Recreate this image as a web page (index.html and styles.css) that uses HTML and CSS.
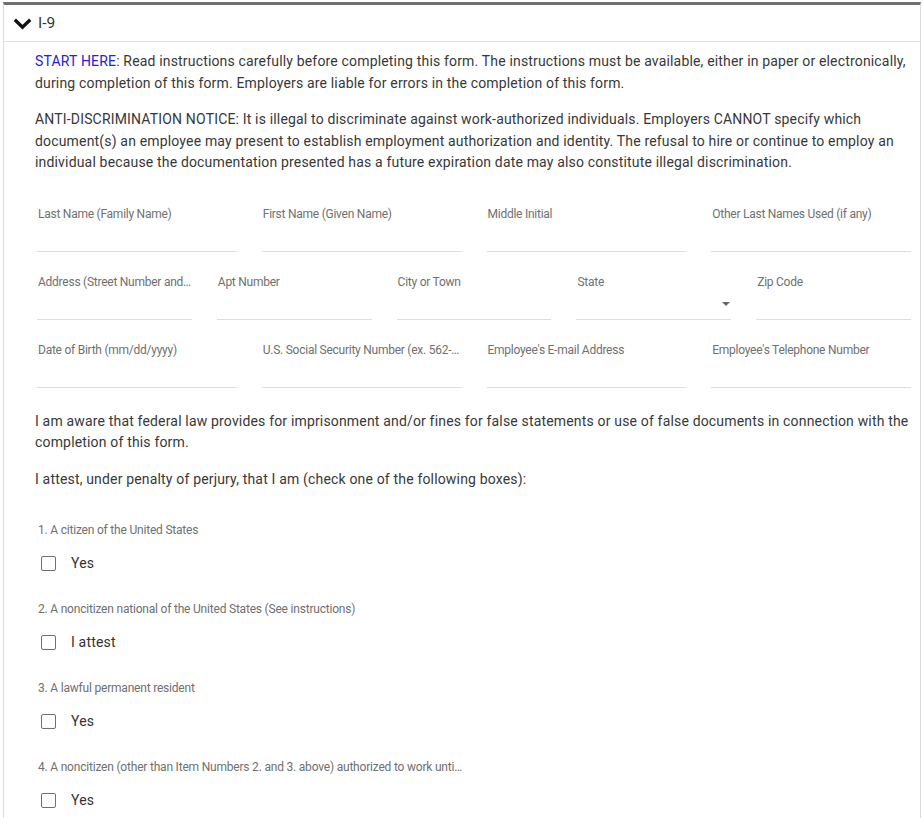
FILE: index.html
```html
<!DOCTYPE html>
<html lang="en">
<head>
    <meta charset="UTF-8">
    <meta name="viewport" content="width=device-width, initial-scale=1.0">
    <title>I-9</title>
    <link rel="stylesheet" href="styles.css">
</head>
<body>
    <div class="panel">
        <div class="panel-header">
            <svg class="chevron" width="19" height="12" viewBox="0 0 19 12">
                <polyline points="1.8,1.8 9.5,9.3 17.2,1.8" fill="none" stroke="#111" stroke-width="3.3"/>
            </svg>
            <span class="panel-title">I-9</span>
        </div>

        <div class="panel-body">
            <p class="text"><span class="start">START HERE</span>: Read instructions carefully before completing this form. The instructions must be available, either in paper or electronically, during completion of this form. Employers are liable for errors in the completion of this form.</p>
            <p class="text">ANTI-DISCRIMINATION NOTICE: It is illegal to discriminate against work-authorized individuals. Employers CANNOT specify which document(s) an employee may present to establish employment authorization and identity. The refusal to hire or continue to employ an individual because the documentation presented has a future expiration date may also constitute illegal discrimination.</p>

            <div class="fields">
                <div class="row cols-4">
                    <div class="field"><label>Last Name (Family Name)</label><div class="input"></div></div>
                    <div class="field"><label>First Name (Given Name)</label><div class="input"></div></div>
                    <div class="field"><label>Middle Initial</label><div class="input"></div></div>
                    <div class="field"><label>Other Last Names Used (if any)</label><div class="input"></div></div>
                </div>
                <div class="row cols-5">
                    <div class="field"><label>Address (Street Number and Name)</label><div class="input"></div></div>
                    <div class="field"><label>Apt Number</label><div class="input"></div></div>
                    <div class="field"><label>City or Town</label><div class="input"></div></div>
                    <div class="field"><label>State</label><div class="input select"><span class="caret"></span></div></div>
                    <div class="field"><label>Zip Code</label><div class="input"></div></div>
                </div>
                <div class="row cols-4">
                    <div class="field"><label>Date of Birth (mm/dd/yyyy)</label><div class="input"></div></div>
                    <div class="field"><label>U.S. Social Security Number (ex. 562-12-3456)</label><div class="input"></div></div>
                    <div class="field"><label>Employee's E-mail Address</label><div class="input"></div></div>
                    <div class="field"><label>Employee's Telephone Number</label><div class="input"></div></div>
                </div>
            </div>

            <p class="text">I am aware that federal law provides for imprisonment and/or fines for false statements or use of false documents in connection with the completion of this form.</p>
            <p class="text">I attest, under penalty of perjury, that I am (check one of the following boxes):</p>

            <div class="questions">
                <div class="question">
                    <div class="q-label">1. A citizen of the United States</div>
                    <label class="check"><span class="box"></span>Yes</label>
                </div>
                <div class="question">
                    <div class="q-label">2. A noncitizen national of the United States (See instructions)</div>
                    <label class="check"><span class="box"></span>I attest</label>
                </div>
                <div class="question">
                    <div class="q-label">3. A lawful permanent resident</div>
                    <label class="check"><span class="box"></span>Yes</label>
                </div>
                <div class="question">
                    <div class="q-label">4. A noncitizen (other than Item Numbers 2. and 3. above) authorized to work until (expiration date, if applicable)</div>
                    <label class="check"><span class="box"></span>Yes</label>
                </div>
            </div>
        </div>
    </div>
</body>
</html>
```

FILE: styles.css
```css
body {
    margin: 2px 2px 0 3px;
    font-family: Roboto, "Liberation Sans", Arial, sans-serif;
    background-color: #fff;
    color: #333;
}
.panel {
    border-top: 3px solid #717171;
    border-left: 1px solid #dcdcdc;
    border-right: 1px solid #dcdcdc;
    padding-bottom: 60px;
}
.panel-header {
    display: flex;
    align-items: center;
    height: 36px;
    padding-left: 9px;
    border-bottom: 1px solid #e2e2e2;
}
.chevron {
    margin-top: 1px;
}
.panel-title {
    margin-left: 6px;
    font-size: 15.5px;
    color: #2f3a2f;
}
.panel-body {
    padding: 9px 9px 0 31px;
}
.text {
    margin: 0 0 15px 0;
    font-size: 14px;
    line-height: 21.5px;
    letter-spacing: 0.17px;
    color: #383838;
}
.start {
    color: #2323d4;
}
.fields {
    margin: 32px 0 23px 2px;
    display: flex;
    flex-direction: column;
    gap: 22px;
}
.row {
    display: grid;
    column-gap: 25px;
}
.cols-4 { grid-template-columns: repeat(4, 1fr); }
.cols-5 { grid-template-columns: repeat(5, 1fr); }
.field {
    min-width: 0;
}
.field label {
    display: block;
    padding-left: 1px;
    font-size: 12px;
    line-height: 16px;
    letter-spacing: -0.25px;
    color: #707070;
    white-space: nowrap;
    overflow: hidden;
    text-overflow: ellipsis;
}
.input {
    height: 29px;
    border-bottom: 1px solid #dedede;
}
.select {
    position: relative;
}
.caret {
    position: absolute;
    right: 1px;
    top: 12px;
    width: 0;
    height: 0;
    border-left: 4px solid transparent;
    border-right: 4px solid transparent;
    border-top: 4px solid #666;
}
.questions {
    margin-top: 32px;
    display: flex;
    flex-direction: column;
    gap: 26px;
}
.q-label {
    max-width: 425px;
    padding-left: 3px;
    font-size: 12px;
    line-height: 16px;
    letter-spacing: -0.2px;
    color: #707070;
    white-space: nowrap;
    overflow: hidden;
    text-overflow: ellipsis;
}
.check {
    display: flex;
    align-items: center;
    height: 24px;
    margin-top: 13px;
    padding-left: 6px;
    font-size: 14px;
    letter-spacing: 0.17px;
    color: #333;
}
.box {
    width: 13px;
    height: 13px;
    margin-right: 15px;
    border: 1.5px solid #707070;
    border-radius: 2px;
}
```
